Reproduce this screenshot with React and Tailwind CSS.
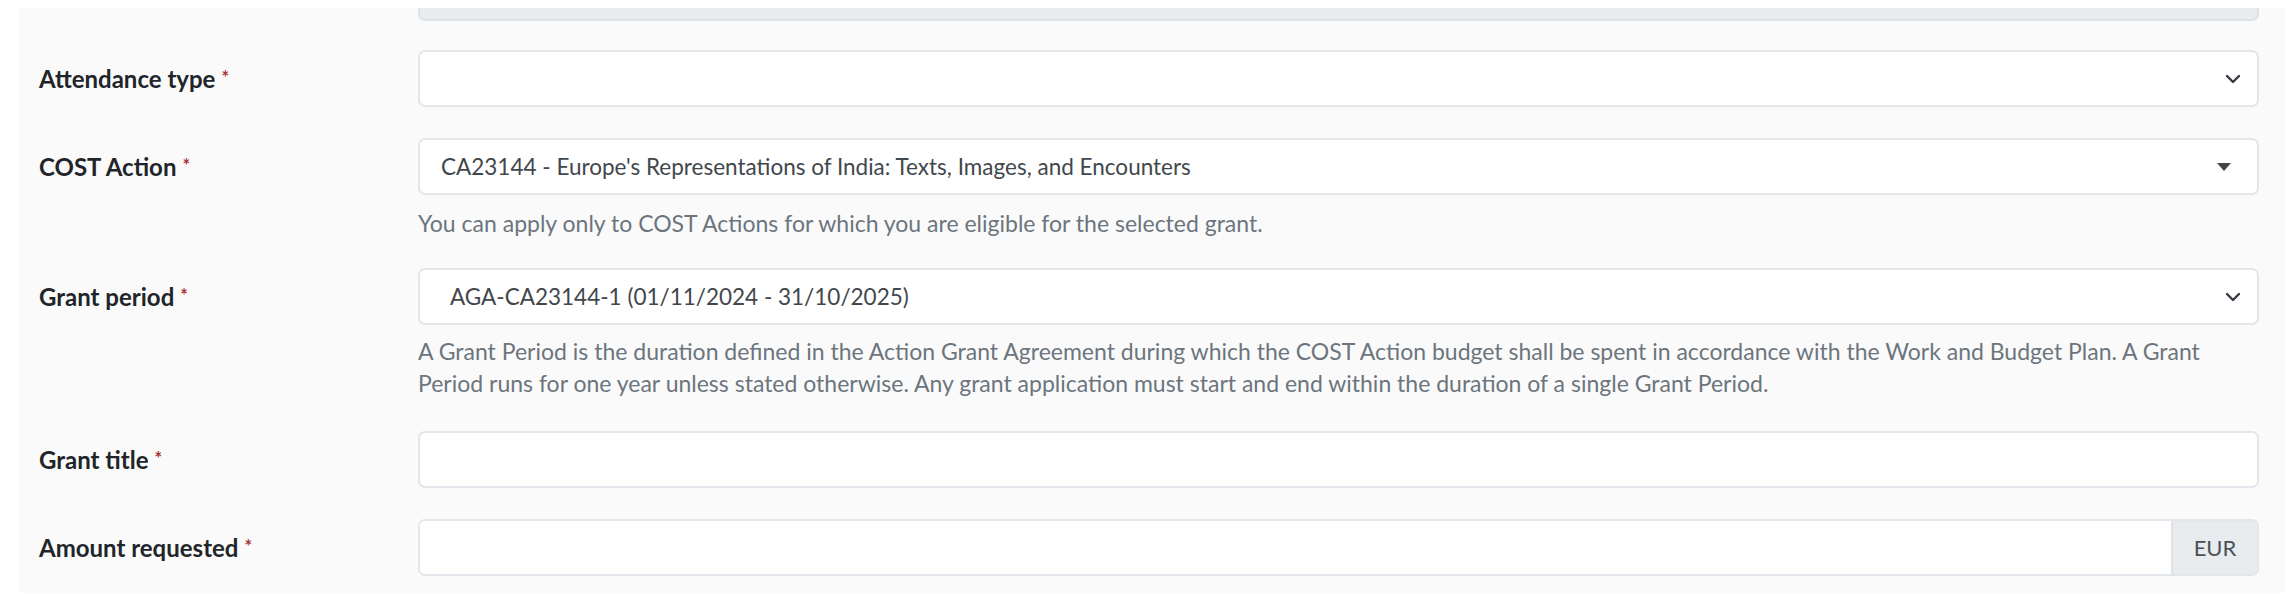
import React from 'react';

const Chevron = () => (
    <svg width="16" height="16" viewBox="0 0 16 16" fill="none" stroke="#343a40" strokeWidth="2.4" strokeLinecap="round" strokeLinejoin="round">
        <path d="m2 5 6 6 6-6" />
    </svg>
);

const Caret = () => (
    <svg width="14" height="8" viewBox="0 0 14 8">
        <path d="M0 0h14L7 8z" fill="#444" />
    </svg>
);

const Label = ({ children }) => (
    <div className="h-[57px] flex items-center text-[24px] font-bold text-[#212529]">
        {children}
        <span className="ml-[6px] text-[18px] leading-none text-[#a83636] self-start mt-[18px]">*</span>
    </div>
);

const Help = ({ children, mt }) => (
    <p className={"text-[23px] leading-[32px] text-[#6c757d] " + mt}>{children}</p>
);

const boxCls = "h-[57px] rounded-[7px] border-2 border-[#e3e6ea] bg-white flex items-center";

const Row = ({ label, mb, children }) => (
    <div className={"grid grid-cols-[399px_1fr] pr-[26px] " + mb}>
        <div className="pl-[20px]">
            <Label>{label}</Label>
        </div>
        <div>{children}</div>
    </div>
);

const App = () => {
    return (
        <div className="w-[2285px] h-[612px] bg-white pt-[8px] pl-[19px]" style={{ fontFamily: 'Lato, "Open Sans", sans-serif' }}>
            <div className="h-[585px] bg-[#fafafa]">
                {/* disabled field, cut off at top */}
                <div className="grid grid-cols-[399px_1fr] pr-[26px] mb-[29px]">
                    <div />
                    <div className="h-[13px] rounded-b-[7px] border-2 border-t-0 border-[#dfe2e6] bg-[#e9ecef]" />
                </div>

                <Row label="Attendance type" mb="mb-[31px]">
                    <div className={boxCls + " justify-end pr-[16px]"}>
                        <Chevron />
                    </div>
                </Row>

                <Row label="COST Action" mb="mb-[29px]">
                    <div className={boxCls + " justify-between pl-[21px] pr-[26px] text-[22.5px] text-[#42474c]"}>
                        <span>CA23144 - Europe's Representations of India: Texts, Images, and Encounters</span>
                        <Caret />
                    </div>
                    <Help mt="mt-[12px]">You can apply only to COST Actions for which you are eligible for the selected grant.</Help>
                </Row>

                <Row label="Grant period" mb="mb-[32px]">
                    <div className={boxCls + " justify-between pl-[30px] pr-[16px] text-[22.5px] text-[#42474c]"}>
                        <span>AGA-CA23144-1 (01/11/2024 - 31/10/2025)</span>
                        <Chevron />
                    </div>
                    <Help mt="mt-[10px]">
                        A Grant Period is the duration defined in the Action Grant Agreement during which the COST Action budget shall be spent in accordance with the Work and Budget Plan. A Grant<br />
                        Period runs for one year unless stated otherwise. Any grant application must start and end within the duration of a single Grant Period.
                    </Help>
                </Row>

                <Row label="Grant title" mb="mb-[31px]">
                    <div className={boxCls} />
                </Row>

                <Row label="Amount requested" mb="mb-0">
                    <div className="h-[57px] flex rounded-[7px] border-2 border-[#e3e6ea] overflow-hidden">
                        <div className="flex-1 bg-white" />
                        <div className="w-[86px] border-l-2 border-[#dfe2e6] bg-[#e9ecef] flex items-center justify-center text-[22px] text-[#495057]">
                            EUR
                        </div>
                    </div>
                </Row>
            </div>
        </div>
    );
};

export default App;
